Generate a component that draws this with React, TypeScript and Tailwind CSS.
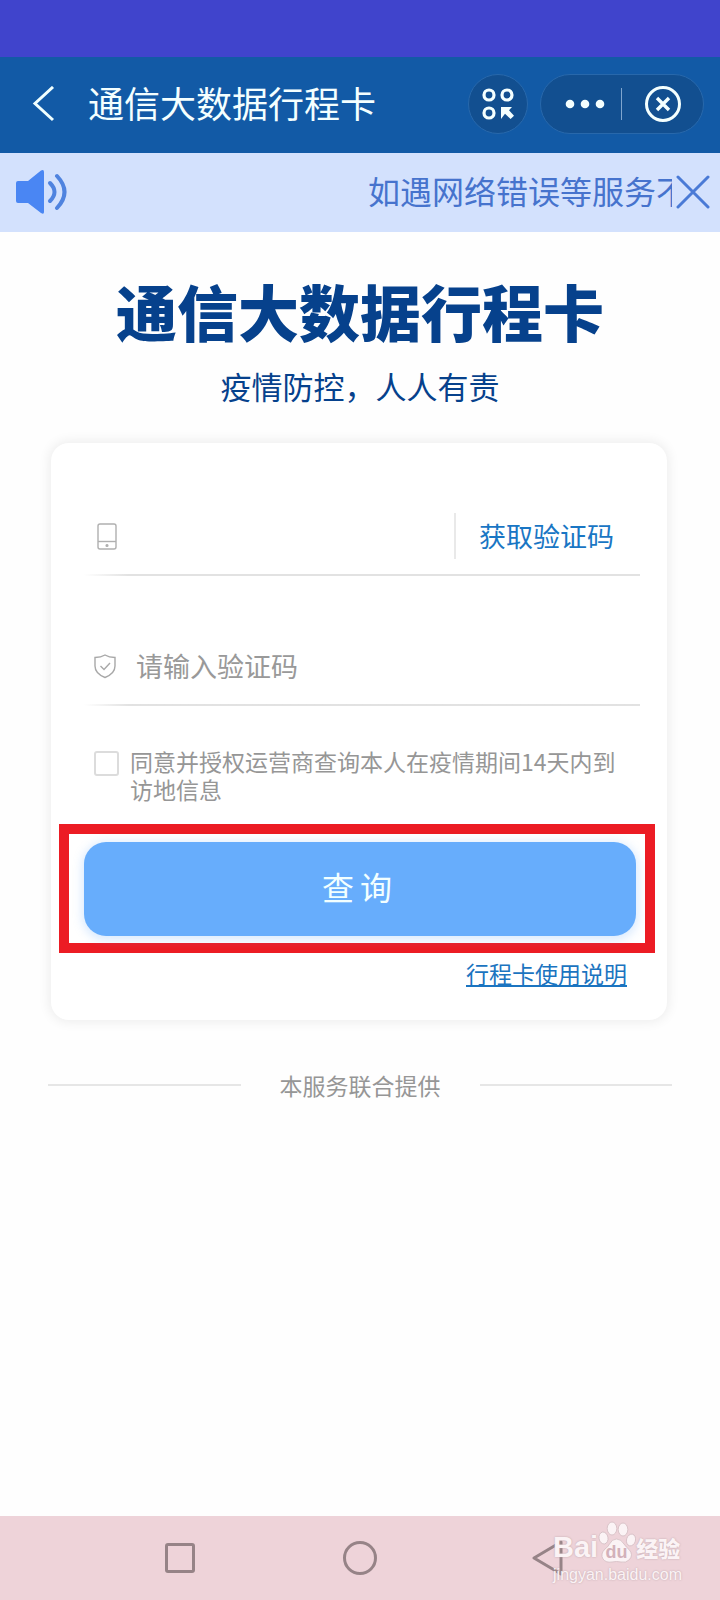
import { useState } from "react";

const NOTICE = "如遇网络错误等服务不";

function Header() {
  return (
    <header className="flex h-24 items-center bg-[#125aa6] pr-4 pb-[3px] pl-8 text-white">
      <button type="button" aria-label="返回" className="flex w-14 shrink-0">
        <svg width="24" height="36" viewBox="0 0 24 36" fill="none" stroke="#f0ffff" strokeWidth="3">
          <path d="M21 1 L3 17.5 L21 34" />
        </svg>
      </button>
      <h1 className="pb-1 text-[36px] leading-[48px] text-[#f4ffff]">通信大数据行程卡</h1>

      <div className="ml-auto flex gap-3">
        <button
          type="button"
          aria-label="小程序"
          className="flex size-[60px] items-center justify-center rounded-full border border-[#2868ab] bg-[#124f90]"
        >
          <svg width="34" height="34" viewBox="0 0 34 34" fill="none" stroke="#f4ffff" strokeWidth="3.2">
            <circle cx="8" cy="8" r="5" />
            <circle cx="26" cy="8" r="5" />
            <circle cx="8" cy="26" r="5" />
            <path d="M20 32 V20 H31 L28 23.2 L33 28.8 L29.6 32 L24 26.8 Z" fill="#f4ffff" stroke="none" />
          </svg>
        </button>
        <div className="flex h-[60px] w-[164px] items-center rounded-full border border-[#2868ab] bg-[#124f90] pl-6">
          <button type="button" aria-label="更多" className="shrink-0">
            <svg width="40" height="10" viewBox="0 0 40 10" fill="#f4ffff">
              <circle cx="5" cy="5" r="4.3" />
              <circle cx="20" cy="5" r="4.3" />
              <circle cx="35" cy="5" r="4.3" />
            </svg>
          </button>
          <span className="ml-4 h-8 w-px bg-[#7fa5ce]" />
          <button type="button" aria-label="关闭" className="flex flex-1 justify-center">
            <svg width="38" height="38" viewBox="0 0 38 38" fill="none" stroke="#f4ffff">
              <circle cx="19" cy="19" r="16.5" strokeWidth="3" />
              <path d="M13 13 L25 25 M25 13 L13 25" strokeWidth="3.4" />
            </svg>
          </button>
        </div>
      </div>
    </header>
  );
}

function Notice({ onClose }: { onClose: () => void }) {
  return (
    <div className="flex h-[79px] items-center bg-[#d3e1fd] pr-[10px] pb-[2px] pl-4">
      <svg width="52" height="46" viewBox="0 0 52 46" fill="none" className="shrink-0">
        <path d="M2 12 H12 L25 1.5 Q28 0 28 3 V43 Q28 46 25 44 L12 34 H2 Q0 34 0 32 V14 Q0 12 2 12 Z" fill="#4a86f3" />
        <path d="M34 14 Q43 23 34 32" stroke="#4f83df" strokeWidth="4" strokeLinecap="round" />
        <path d="M41 7 Q56 23 41 39" stroke="#4f83df" strokeWidth="4" strokeLinecap="round" />
      </svg>
      <p className="ml-auto w-[304px] overflow-hidden pb-1 text-[32px] leading-[44px] whitespace-nowrap text-[#4673cd]">
        {NOTICE}
      </p>
      <button type="button" aria-label="关闭通知" className="ml-1 shrink-0" onClick={onClose}>
        <svg width="34" height="34" viewBox="0 0 34 34" stroke="#4a7ad6" strokeWidth="3" strokeLinecap="round">
          <path d="M2 2 L32 32 M32 2 L2 32" />
        </svg>
      </button>
    </div>
  );
}

function FieldLine() {
  return <div className="h-[2px] bg-linear-to-r from-white via-[#e2e2e2] via-8% to-[#e2e2e2]" />;
}

function QueryCard() {
  const [phone, setPhone] = useState("");
  const [code, setCode] = useState("");
  const [agreed, setAgreed] = useState(false);

  return (
    <form
      onSubmit={(e) => e.preventDefault()}
      className="mr-[53px] ml-[51px] rounded-[18px] bg-white pt-[58px] pb-[30px] shadow-[0_0_12px_2px_rgba(0,0,0,0.07)]"
    >
      <div className="mr-[27px] ml-[33px]">
        <div className="flex h-[73px] items-center pb-[3px] pl-3">
          <svg width="22" height="28" viewBox="0 0 22 28" fill="none" stroke="#b0b0b0" strokeWidth="1.4" className="shrink-0">
            <rect x="2" y="2" width="18" height="25" rx="2" />
            <path d="M2 19.5 H20" />
            <circle cx="11" cy="23.5" r="0.9" fill="#999" />
          </svg>
          <input
            type="tel"
            aria-label="手机号"
            value={phone}
            onChange={(e) => setPhone(e.target.value)}
            className="ml-4 h-10 min-w-0 flex-1 text-[27px] text-[#666] outline-none"
          />
          <button
            type="button"
            className="h-[46px] border-l-2 border-[#e9e9e9] pr-[26px] pl-[23px] text-[27px] leading-[40px] text-[#1976c4]"
          >
            获取验证码
          </button>
        </div>
        <FieldLine />

        <div className="mt-[55px] flex h-[73px] items-center pb-[3px] pl-2">
          <svg width="26" height="26" viewBox="0 0 26 26" fill="none" stroke="#a8a8a8" strokeWidth="1.4" className="shrink-0">
            <path d="M13 2 Q17 4.5 23 4.5 V13 Q23 20.5 13 24.5 Q3 20.5 3 13 V4.5 Q9 4.5 13 2 Z" />
            <path d="M8.5 13 L12 16.5 L18 10" />
          </svg>
          <input
            type="text"
            aria-label="验证码"
            placeholder="请输入验证码"
            value={code}
            onChange={(e) => setCode(e.target.value)}
            className="ml-[18px] h-10 min-w-0 flex-1 text-[27px] text-[#666] outline-none placeholder:text-[#999]"
          />
        </div>
        <FieldLine />

        <div className="mt-[41px] flex pr-5 pl-[10px]">
          <input
            id="agree"
            type="checkbox"
            checked={agreed}
            onChange={(e) => setAgreed(e.target.checked)}
            className="mt-1 size-[25px] shrink-0 appearance-none rounded-[3px] border-2 border-[#dcdcdc] bg-white checked:bg-[#67adfc]"
          />
          <label htmlFor="agree" className="ml-[11px] text-[23px] leading-7 text-[#969696]">
            同意并授权运营商查询本人在疫情期间14天内到访地信息
          </label>
        </div>
      </div>

      <div className="mt-[21px] mr-3 ml-2 border-[10px] border-[#ec1c24] pt-2 pr-[9px] pb-[7px] pl-[15px]">
        <button
          type="submit"
          className="flex h-[94px] w-full items-center justify-center gap-[6px] rounded-[22px] bg-[#67adfc] pr-[6px] pb-[6px] text-[32px] text-[#f2ffff] shadow-[0_2px_10px_2px_rgba(103,173,252,0.25)]"
        >
          <span>查</span>
          <span>询</span>
        </button>
      </div>

      <div className="mt-[3px] pr-10 text-right text-[23px] leading-[34px]">
        <a href="#guide" className="text-[#1b74c0] underline">行程卡使用说明</a>
      </div>
    </form>
  );
}

function Watermark() {
  return (
    <div className="absolute top-1 right-[38px] text-[#fbf3f5]">
      <div className="flex h-[43px] items-end">
        <span className="font-[Liberation_Sans] text-[29px] leading-8 font-bold [text-shadow:0_0_2px_#b9a3a9]">Bai</span>
        <svg width="38" height="42" viewBox="0 0 38 42" fill="#fbf3f5" stroke="#d3bcc2" strokeWidth="0.8">
          <ellipse cx="5.5" cy="17" rx="4.5" ry="6" transform="rotate(-10 5.5 17)" />
          <ellipse cx="14" cy="7.5" rx="4.8" ry="6.5" />
          <ellipse cx="25" cy="8.5" rx="4.8" ry="6.5" />
          <ellipse cx="33" cy="19" rx="4.5" ry="6" transform="rotate(15 33 19)" />
          <path d="M18.5 18 Q23 18 26 23 Q28 26 31 28.5 Q36 34 31 39 Q28 42 23 41 Q18.5 40 14 41 Q8 42 5 38 Q2 33 7 28 Q10 26 11.5 23 Q14 18 18.5 18 Z" />
          <text x="18.5" y="37" textAnchor="middle" fontFamily="Liberation Sans" fontSize="18" fontWeight="700" fill="#d3b1ba" stroke="none">
            du
          </text>
        </svg>
        <span className="text-[22px] leading-8 font-black [text-shadow:0_0_2px_#b9a3a9]">经验</span>
      </div>
      <div className="font-[Liberation_Sans] text-[16px] leading-6 [text-shadow:0_0_2px_#b9a3a9]">jingyan.baidu.com</div>
    </div>
  );
}

function SystemBar() {
  return (
    <nav className="relative mt-auto grid h-[84px] grid-cols-3 items-center justify-items-center bg-[#eed3d9] px-[90px]">
      <button type="button" aria-label="最近任务">
        <svg width="36" height="36" viewBox="0 0 36 36" fill="none" stroke="#968387" strokeWidth="3">
          <rect x="4.5" y="4.5" width="27" height="27" rx="1.5" />
        </svg>
      </button>
      <button type="button" aria-label="主页">
        <svg width="36" height="36" viewBox="0 0 36 36" fill="none" stroke="#968387" strokeWidth="3">
          <circle cx="18" cy="18" r="15.5" />
        </svg>
      </button>
      <button type="button" aria-label="返回上一页" className="pl-4">
        <svg width="36" height="36" viewBox="0 0 36 36" fill="none" stroke="#968387" strokeWidth="3" strokeLinejoin="round">
          <path d="M31 2 V34 L4 18 Z" />
        </svg>
      </button>
      <Watermark />
    </nav>
  );
}

export default function App() {
  const [showNotice, setShowNotice] = useState(true);

  return (
    <div className="flex min-h-screen flex-col bg-[#fefefe] font-['Noto_Sans_CJK_SC',sans-serif]">
      <div className="h-[57px] bg-[#4044cc]" />
      <Header />
      {showNotice && <Notice onClose={() => setShowNotice(false)} />}

      <main>
        <div className="pt-[39px] pb-[35px] text-center text-[#06418c]">
          <h2 className="text-[61px] leading-[80px] font-black">通信大数据行程卡</h2>
          <p className="mt-3 text-[31px] leading-[45px]">疫情防控，人人有责</p>
        </div>
        <QueryCard />
        <div className="mt-[49px] flex items-center px-12">
          <span className="h-[2px] flex-1 bg-[#e6e6e6]" />
          <span className="px-[39px] text-[23px] leading-8 text-[#969696]">本服务联合提供</span>
          <span className="h-[2px] flex-1 bg-[#e6e6e6]" />
        </div>
      </main>

      <SystemBar />
    </div>
  );
}
